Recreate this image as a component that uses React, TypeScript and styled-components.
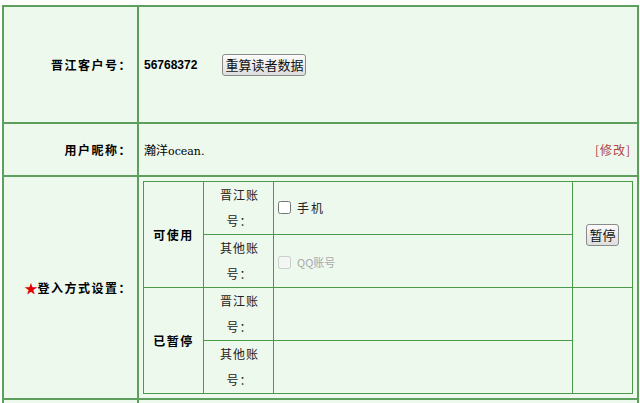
import React from "react";
import styled, { createGlobalStyle } from "styled-components";

const GlobalStyle = createGlobalStyle`
  body {
    margin: 0;
    background: #fff;
    font-family: "Noto Sans CJK SC", "Liberation Sans", sans-serif;
    font-size: 12px;
    color: #000;
  }
`;

const Page = styled.div`
  padding: 5px 0 0 2px;
`;

const Sheet = styled.table`
  width: 637px;
  border-collapse: collapse;
  background: #eef9ee;
  border: 2px solid #5e9f5e;
`;

const LabelCell = styled.th`
  width: 128px;
  padding: 0 5px 0 0;
  text-align: right;
  font-weight: bold;
  font-size: 12px;
  letter-spacing: 1.5px;
  border: 2px solid #5e9f5e;
`;

const ValueCell = styled.td<{ $h?: number; $pad?: number }>`
  height: ${(p) => p.$h ?? 0}px;
  padding: ${(p) => p.$pad ?? 0}px ${(p) => p.$pad ?? 5}px;
  border: 2px solid #5e9f5e;
  vertical-align: middle;
`;

const Row = styled.div`
  display: flex;
  align-items: center;
`;

const Number = styled.span`
  font-family: "Liberation Sans", sans-serif;
  font-weight: bold;
  font-size: 12px;
  margin-top: 1px;
`;

const Button = styled.button<{ $ml?: number }>`
  margin-left: ${(p) => p.$ml ?? 0}px;
  height: 22px;
  padding: 0 2px;
  font-family: "Noto Sans CJK SC", sans-serif;
  font-size: 13px;
  color: #111;
  background: linear-gradient(#fbfbfb, #dedede);
  border: 1px solid #8a8a8a;
  border-radius: 3px;
`;

const Nick = styled.span`
  flex: 1;
  font-size: 12px;
  & em {
    font-style: normal;
    font-family: "DejaVu Serif", serif;
    font-size: 11px;
  }
`;

const EditLink = styled.a`
  color: #b0433f;
  font-size: 12px;
  letter-spacing: 1px;
  text-decoration: none;
  margin-right: 1px;
`;

const Star = styled.span`
  color: #e00000;
  font-size: 13px;
  letter-spacing: 0;
`;

const Inner = styled.table`
  width: 100%;
  table-layout: fixed;
  border-collapse: collapse;
  border: 1px solid #4a9a4a;
`;

const StateCell = styled.td`
  text-align: center;
  font-weight: bold;
  letter-spacing: 1.5px;
  border: 1px solid #4a9a4a;
`;

const KindCell = styled.td`
  height: 52px;
  padding: 0 13px 0 15px;
  text-align: center;
  line-height: 26px;
  color: #222;
  letter-spacing: 1px;
  border: 1px solid #4a9a4a;
`;

const OptionCell = styled.td`
  padding: 0 4px;
  border: 1px solid #4a9a4a;
`;

const ActionCell = styled.td`
  text-align: center;
  border: 1px solid #4a9a4a;
`;

const Check = styled.label<{ $off?: boolean }>`
  display: inline-flex;
  align-items: center;
  gap: 6px;
  font-size: ${(p) => (p.$off ? 11 : 12)}px;
  color: ${(p) => (p.$off ? "#aaa" : "#222")};
  margin-top: ${(p) => (p.$off ? 4 : -3)}px;
  letter-spacing: ${(p) => (p.$off ? 0 : 2)}px;
  & input {
    margin: 0;
    width: 13px;
    height: 13px;
  }
`;

export default function App() {
  return (
    <Page>
      <GlobalStyle />
      <Sheet>
        <tbody>
          <tr>
            <LabelCell>晋江客户号：</LabelCell>
            <ValueCell $h={115}>
              <Row>
                <Number>56768372</Number>
                <Button $ml={25}>重算读者数据</Button>
              </Row>
            </ValueCell>
          </tr>
          <tr>
            <LabelCell>用户昵称：</LabelCell>
            <ValueCell $h={51}>
              <Row>
                <Nick>
                  瀚洋<em>ocean.</em>
                </Nick>
                <EditLink>[修改]</EditLink>
              </Row>
            </ValueCell>
          </tr>
          <tr>
            <LabelCell>
              <Star>★</Star>登入方式设置：
            </LabelCell>
            <ValueCell $pad={4}>
              <Inner>
                <colgroup>
                  <col style={{ width: 60 }} />
                  <col style={{ width: 70 }} />
                  <col />
                  <col style={{ width: 60 }} />
                </colgroup>
                <tbody>
                  <tr>
                    <StateCell rowSpan={2}>可使用</StateCell>
                    <KindCell>晋江账号：</KindCell>
                    <OptionCell>
                      <Check>
                        <input type="checkbox" />
                        手机
                      </Check>
                    </OptionCell>
                    <ActionCell rowSpan={2}>
                      <Button>暂停</Button>
                    </ActionCell>
                  </tr>
                  <tr>
                    <KindCell>其他账号：</KindCell>
                    <OptionCell>
                      <Check $off>
                        <input type="checkbox" disabled />
                        QQ账号
                      </Check>
                    </OptionCell>
                  </tr>
                  <tr>
                    <StateCell rowSpan={2}>已暂停</StateCell>
                    <KindCell>晋江账号：</KindCell>
                    <OptionCell />
                    <ActionCell rowSpan={2} />
                  </tr>
                  <tr>
                    <KindCell>其他账号：</KindCell>
                    <OptionCell />
                  </tr>
                </tbody>
              </Inner>
            </ValueCell>
          </tr>
          <tr>
            <LabelCell />
            <ValueCell $h={40} />
          </tr>
        </tbody>
      </Sheet>
    </Page>
  );
}
